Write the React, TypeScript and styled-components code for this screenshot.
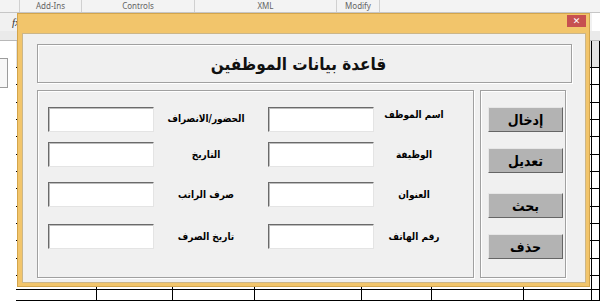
import styled, { createGlobalStyle } from "styled-components"

const GlobalStyle = createGlobalStyle`
  html, body {
    margin: 0;
    padding: 0;
    background: #fff;
  }
  body {
    overflow: hidden;
  }
  * {
    box-sizing: border-box;
  }
`

const arabicFont = `"DejaVu Sans Condensed", "DejaVu Sans", sans-serif`

const Screen = styled.div`
  position: relative;
  width: 600px;
  height: 301px;
  overflow: hidden;
  background: #fff;
  font-family: ${arabicFont};
`

/* ---------- excel sheet behind the form ---------- */

const Sheet = styled.div`
  display: flex;
  flex-direction: column;
  height: 100%;
`

const Ribbon = styled.div`
  display: flex;
  height: 13px;
  background: #f3f3f3;
  border-bottom: 1px solid #c6c6c6;
`

const RibbonGroup = styled.div<{ $w: number }>`
  flex: none;
  width: ${(p) => p.$w}px;
  border-right: 1px solid #d0d0d0;
  font: 8px/12px "Noto Sans", sans-serif;
  color: #646464;
  text-align: center;
`

const FormulaBar = styled.div`
  display: flex;
  height: 18px;
`

const NameArea = styled.div`
  width: 592px;
  background: #f1f1f1;
  padding: 3px 0 0 12px;
  font: italic 11px "Liberation Serif", serif;
  color: #333;
`

const FormulaInput = styled.div`
  flex: 1;
  background: #fff;
`

const ColumnHeads = styled.div`
  height: 10px;
  background: #eaeaea;
  border-bottom: 1px solid #b8b8b8;
`

const SheetBody = styled.div`
  flex: 1;
  display: flex;
`

const Gutter = styled.div`
  width: 16px;
  flex: none;
  padding-top: 17px;
`

const SideTab = styled.div`
  width: 8px;
  height: 30px;
  background: #f7f7f7;
  border: 1px solid #9c9c9c;
  border-left: none;
`

const Cells = styled.div`
  flex: 1;
  display: grid;
  grid-template-columns: 81px 76px 82px 107px 70px 92px 68px 1fr;
  grid-template-rows: 27px repeat(12, 17.33px) 14px 1fr;
`

const Cell = styled.div<{ $head?: boolean }>`
  border-right: 1px solid #000;
  border-bottom: 1px solid #000;
  background: ${(p) => (p.$head ? "#e2e2e2" : "#fff")};
`

/* ---------- the user form ---------- */

const Dialog = styled.div`
  position: absolute;
  left: 17px;
  top: 13px;
  width: 573px;
  height: 274px;
  display: flex;
  flex-direction: column;
  background: #f2c56b;
  border: 1px solid #d3a54c;
`

const TitleBar = styled.div`
  height: 19px;
  display: flex;
  justify-content: flex-end;
  align-items: flex-start;
  padding: 1px 3px 0 0;
`

const CloseButton = styled.div`
  width: 19px;
  height: 12px;
  background: #c75050;
  color: #fff;
  font: bold 9px/12px "DejaVu Sans", sans-serif;
  text-align: center;
`

const Client = styled.div`
  flex: 1;
  margin: 0 3px 3px 4px;
  background: #f0f0f0;
  border: 1px solid #cbb689;
  padding: 10px 13px 4px 14px;
  display: flex;
  flex-direction: column;
  gap: 7px;
`

const HeaderBox = styled.div`
  height: 39px;
  padding-right: 12px;
  border: 1px solid #a0a0a0;
  box-shadow: 1px 1px 0 #fff, inset 1px 1px 0 #fff;
  display: flex;
  align-items: center;
  justify-content: center;
`

const Title = styled.h1`
  margin: 0;
  direction: rtl;
  font: bold 17px ${arabicFont};
  color: #111;
`

const MainRow = styled.div`
  display: flex;
  gap: 6px;
  height: 188px;
`

const FieldsFrame = styled.div`
  width: 437px;
  direction: rtl;
  padding: 0 19px 0 10px;
  border: 1px solid #a0a0a0;
  box-shadow: 1px 1px 0 #fff, inset 1px 1px 0 #fff;
`

const FieldRow = styled.div<{ $top: number }>`
  display: grid;
  grid-template-columns: 80px 106px 114px 106px;
  height: 25px;
  margin-top: ${(p) => p.$top}px;
`

const Label = styled.label<{ $lift?: number; $side?: "left" | "right" }>`
  align-self: center;
  text-align: center;
  padding-right: ${(p) => (p.$side === "left" ? 10 : 0)}px;
  margin-bottom: ${(p) => p.$lift || 0}px;
  font: bold 10px ${arabicFont};
  color: #000;
  white-space: nowrap;
`

const TextBox = styled.div`
  height: 25px;
  background: #fff;
  border: 1px solid;
  border-color: #6a6a6a #e4e4e4 #e4e4e4 #6a6a6a;
  box-shadow: inset 1px 1px 0 #bdbdbd;
`

const ButtonsFrame = styled.div`
  width: 86px;
  padding-left: 7px;
  border: 1px solid #a0a0a0;
  box-shadow: 1px 1px 0 #fff, inset 1px 1px 0 #fff;
  display: flex;
  flex-direction: column;
`

const ActionButton = styled.button<{ $top: number }>`
  width: 75px;
  height: 25px;
  margin-top: ${(p) => p.$top}px;
  padding: 0;
  background: #b3b3b3;
  border: 1px solid;
  border-color: #e6e6e6 #656565 #656565 #e6e6e6;
  font: bold 14px ${arabicFont};
  color: #000;
  direction: rtl;
`

const ribbonGroups = [
  { w: 20, label: "" },
  { w: 62, label: "Add-Ins" },
  { w: 113, label: "Controls" },
  { w: 142, label: "XML" },
  { w: 43, label: "Modify" },
]

const fields = [
  { top: 16, right: "اسم الموظف", left: "الحضور/الانصراف", lift: 10, leftLift: 3 },
  { top: 10, right: "الوظيفة", left: "التاريخ", lift: 0, leftLift: 0 },
  { top: 15, right: "العنوان", left: "صرف الراتب", lift: 0, leftLift: 0 },
  { top: 17, right: "رقم الهاتف", left: "تاريخ الصرف", lift: 0, leftLift: 0 },
]

const buttons = [
  { top: 16, label: "إدخال" },
  { top: 16, label: "تعديل" },
  { top: 20, label: "بحث" },
  { top: 16, label: "حذف" },
]

export default function App() {
  const rows = 15
  const cols = 8

  return (
    <Screen>
      <GlobalStyle />
      <Sheet>
        <Ribbon>
          {ribbonGroups.map((g) => (
            <RibbonGroup key={g.w + g.label} $w={g.w}>
              {g.label}
            </RibbonGroup>
          ))}
        </Ribbon>
        <FormulaBar>
          <NameArea>fx</NameArea>
          <FormulaInput />
        </FormulaBar>
        <ColumnHeads />
        <SheetBody>
          <Gutter>
            <SideTab />
          </Gutter>
          <Cells>
            {Array.from({ length: rows * cols }).map((_, i) => (
              <Cell key={i} $head={i < cols} />
            ))}
          </Cells>
        </SheetBody>
      </Sheet>

      <Dialog>
        <TitleBar>
          <CloseButton>✕</CloseButton>
        </TitleBar>
        <Client>
          <HeaderBox>
            <Title>قاعدة بيانات الموظفين</Title>
          </HeaderBox>
          <MainRow>
            <FieldsFrame>
              {fields.map((f) => (
                <FieldRow key={f.right} $top={f.top}>
                  <Label $lift={f.lift}>{f.right}</Label>
                  <TextBox />
                  <Label $side="left" $lift={f.leftLift}>
                    {f.left}
                  </Label>
                  <TextBox />
                </FieldRow>
              ))}
            </FieldsFrame>
            <ButtonsFrame>
              {buttons.map((b) => (
                <ActionButton key={b.label} $top={b.top}>
                  {b.label}
                </ActionButton>
              ))}
            </ButtonsFrame>
          </MainRow>
        </Client>
      </Dialog>
    </Screen>
  )
}
